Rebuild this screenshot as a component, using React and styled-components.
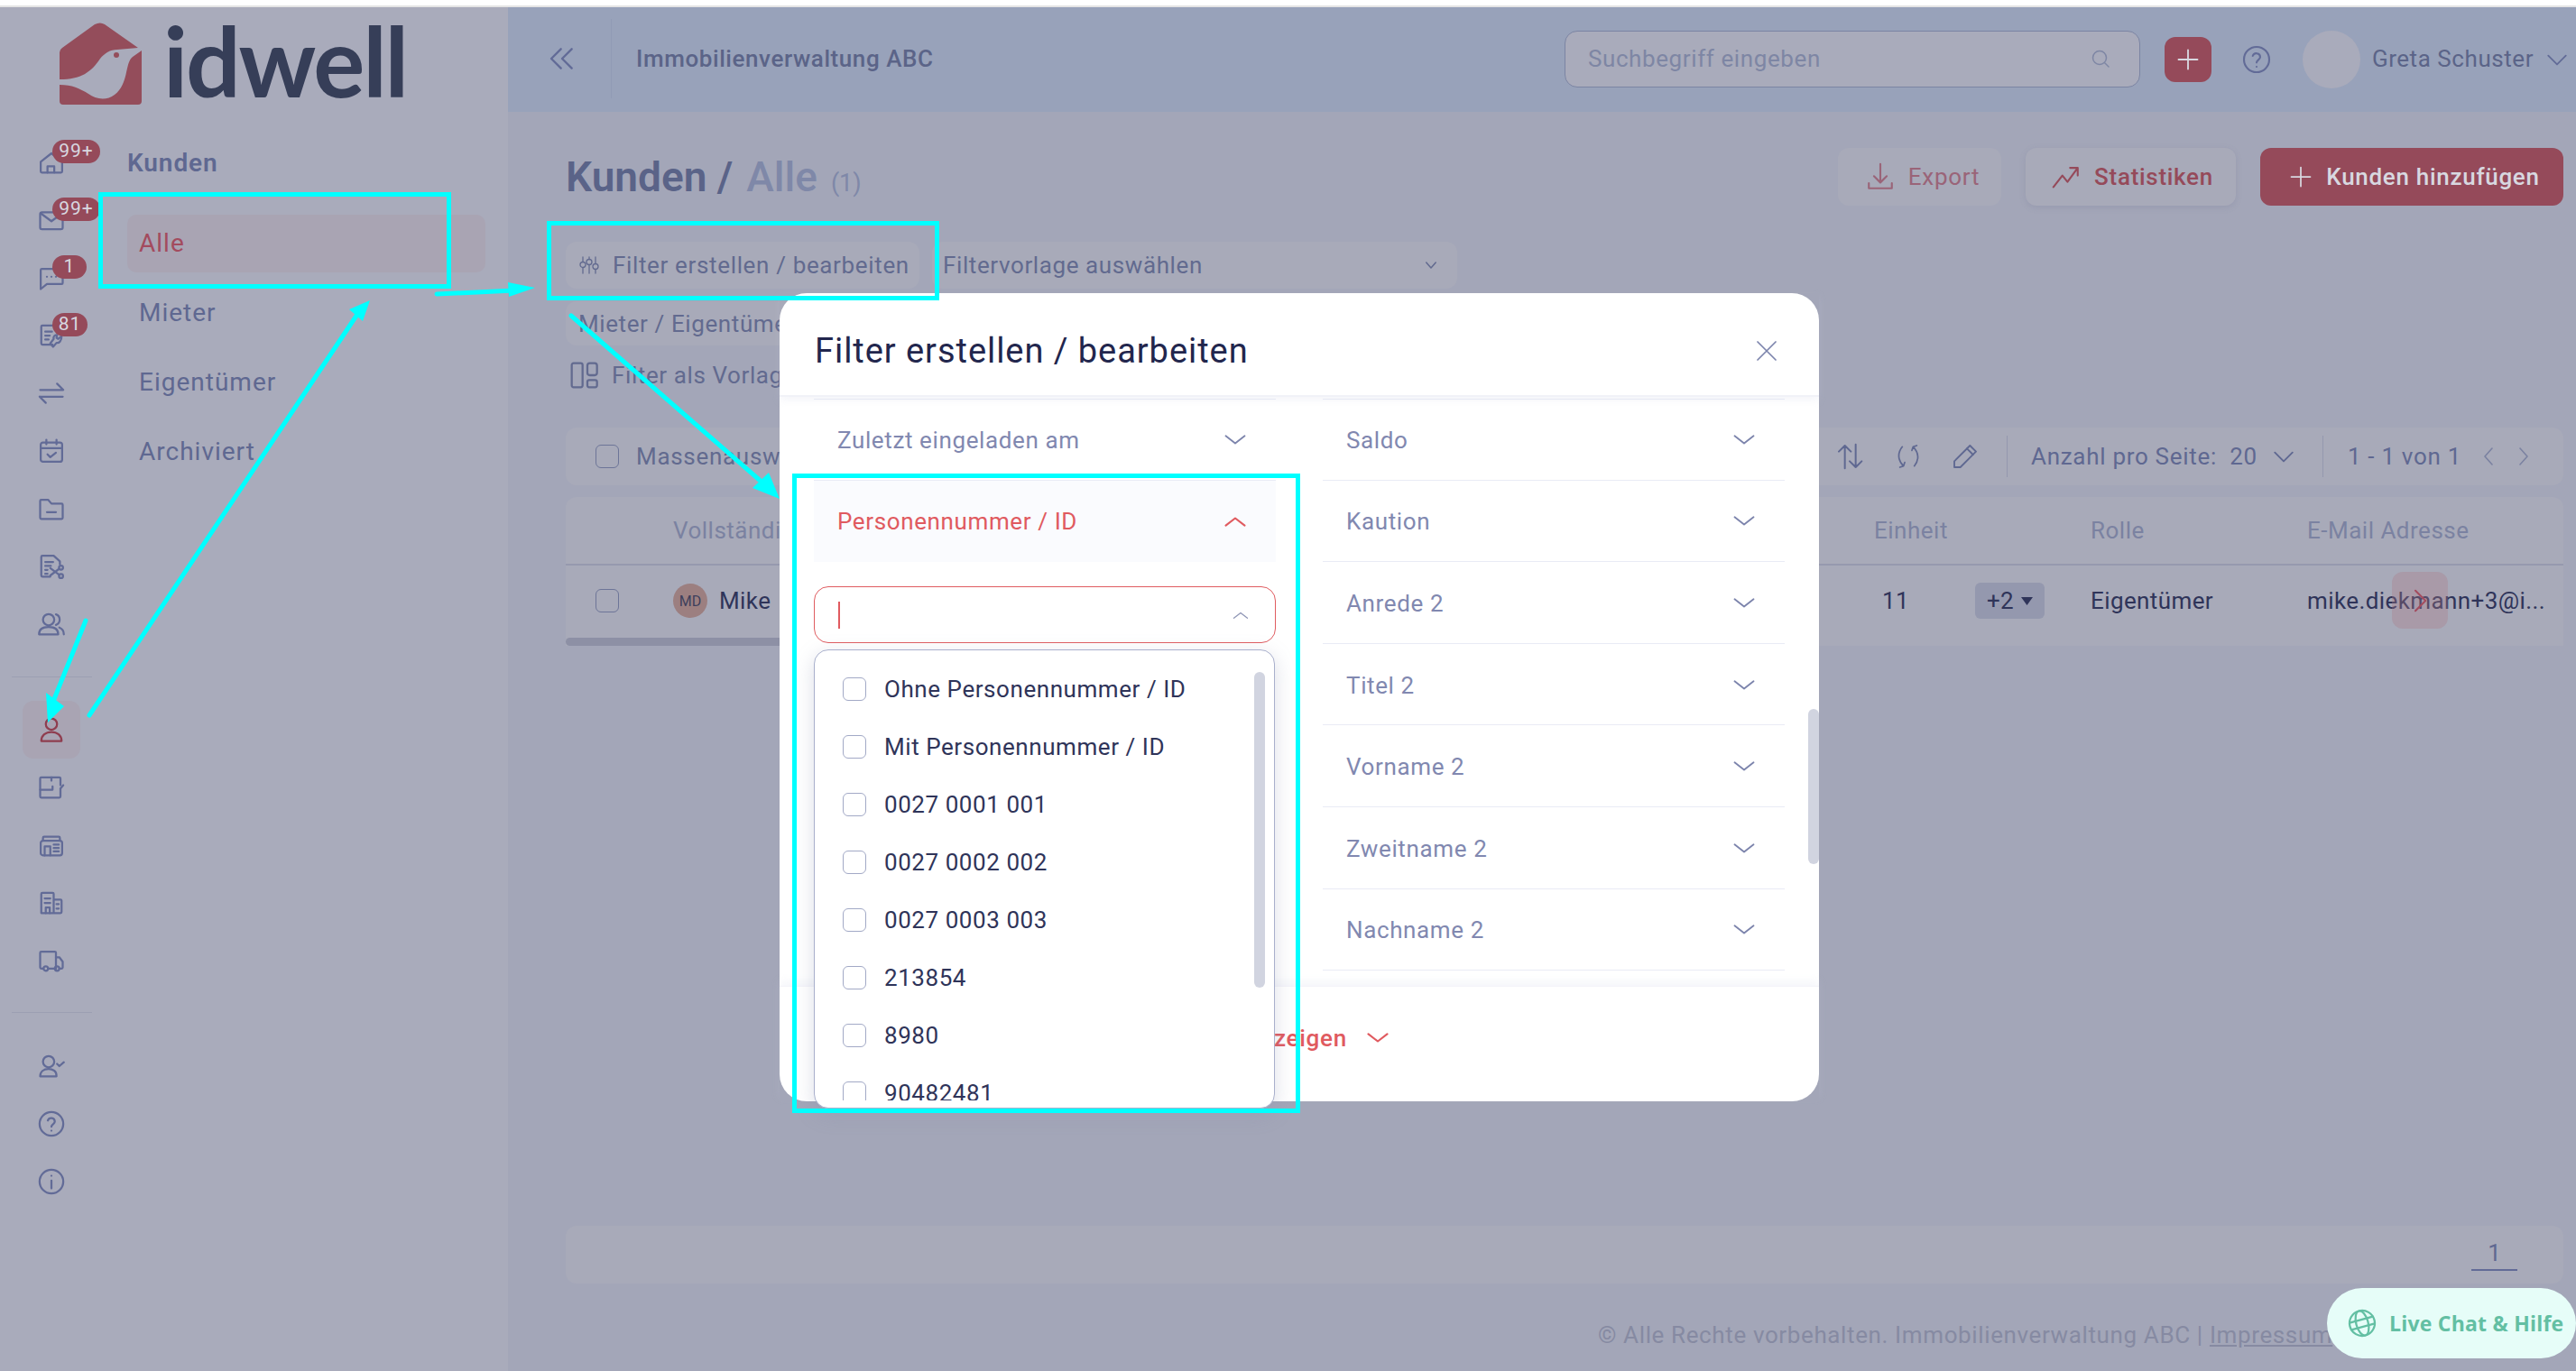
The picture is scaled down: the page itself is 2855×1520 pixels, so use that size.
import React from 'react';
import styled, { createGlobalStyle } from 'styled-components';

const Global = createGlobalStyle`
  html, body { margin: 0; padding: 0; background: #fff; }
  body { font-family: Roboto, "Liberation Sans", sans-serif; overflow: hidden; }
  * { box-sizing: border-box; }
`;

const ink = '#626b97';
const Page = styled.div`position: relative; width: 2855px; height: 1520px; overflow: hidden; background: #fff;`;
const TopEdge = styled.div`height: 8px; background: #fff; border-bottom: 2px solid #e4e4e4;`;
const Shell = styled.div`display: flex; height: 1512px;`;
const Sidebar = styled.aside`width: 563px; flex: none; background: #a9abbb; display: flex; flex-direction: column;`;
const LogoRow = styled.div`height: 140px; flex: none; display: flex; align-items: flex-start; padding: 17px 0 0 66px; gap: 24px;`;
const LogoText = styled.span`font-family: Lato, sans-serif; font-weight: 700; font-size: 107px; line-height: 84px; letter-spacing: -2.2px; color: #363e58;`;
const SideBody = styled.div`display: flex; flex: 1;`;
const Rail = styled.nav`width: 114px; flex: none; display: flex; flex-direction: column; align-items: center;`;
const RailItem = styled.div`
  position: relative; width: 64px; height: 64px; flex: none; display: flex; align-items: center; justify-content: center;
  color: ${p => (p.$active ? '#8f3d4f' : ink)}; background: ${p => (p.$active ? '#a9a4b3' : 'transparent')}; border-radius: 12px;
`;
const Badge = styled.span`
  position: absolute; left: ${p => p.$left}px; top: 7px; height: 26px; width: ${p => p.$w}px; border-radius: 13px;
  background: #954a5a; color: #d8d8e0; font-size: 21px; line-height: 24px; text-align: center; letter-spacing: 1px;
`;
const RailRule = styled.div`width: 89px; height: 1px; background: #9c9fb2; margin: ${p => p.$m};`;
const SubNav = styled.div`flex: 1; padding-left: 27px; padding-right: 25px;`;
const SubHead = styled.div`height: 64px; line-height: 64px; font-weight: 600; font-size: 28px; letter-spacing: .9px; color: #5f6891; margin-top: 1px; margin-bottom: 25px;`;
const SubItem = styled.div`
  height: 64px; line-height: 64px; margin-bottom: 13px; padding-left: 13px; border-radius: 10px; font-size: 28px; letter-spacing: 1px;
  color: ${p => (p.$active ? '#a34b5e' : '#5f6891')}; background: ${p => (p.$active ? '#a9a4b3' : 'transparent')};
`;
const Main = styled.main`flex: 1; background: #a3a6b8; display: flex; flex-direction: column; min-width: 0;`;
const Header = styled.header`height: 116px; flex: none; background: #98a2ba; display: flex; align-items: center; color: ${ink};`;
const Collapse = styled.div`width: 115px; height: 88px; flex: none; display: flex; align-items: center; padding-left: 44px; border-right: 1px solid #919bb5; margin-top: -2px;`;
const Company = styled.div`margin-left: 27px; font-size: 26px; font-weight: 500; letter-spacing: .58px; color: #5b6488; margin-top: -2px;`;
const Search = styled.div`
  margin-left: auto; width: 638px; height: 63px; margin-top: -1px; border: 1.5px solid #7b84a3; border-radius: 14px; background: #a9abbb;
  display: flex; align-items: center; padding: 0 31px 2px 25px; justify-content: space-between; color: #7e86a4; font-size: 26px; letter-spacing: .6px;
`;
const PlusBtn = styled.div`width: 52px; height: 50px; margin-left: 27px; border-radius: 12px; background: #954a5a; color: #d8d8e0; display: flex; align-items: center; justify-content: center;`;
const HelpWrap = styled.div`margin-left: 34px; display: flex; color: ${ink};`;
const Avatar = styled.div`width: 64px; height: 64px; margin-left: 35px; border-radius: 50%; background: #a9abbb;`;
const UserName = styled.div`margin-left: 13px; font-size: 26px; letter-spacing: .55px; color: #5b6488; margin-top: -2px;`;
const UserChevron = styled.div`margin-left: 13px; display: flex; margin-right: 8px;`;
const Content = styled.div`flex: 1; padding: 40px 14px 0 64px; display: flex; flex-direction: column; position: relative;`;
const TitleRow = styled.div`display: flex; align-items: center; height: 64px;`;
const Title = styled.h1`margin: 0; font-size: 46px; font-weight: 600; color: #5a6388; display: flex; align-items: baseline; gap: 15px; white-space: pre;`;
const TitleSoft = styled.span`color: #7f88a8; font-weight: 500;`;
const TitleCount = styled.span`color: #7f88a8; font-size: 27px; font-weight: 400;`;
const Actions = styled.div`margin-left: auto; display: flex; gap: 27px;`;
const ActionBtn = styled.div`
  height: 64px; width: ${p => p.$w}px; padding-left: ${p => p.$pl}px; border-radius: 12px; display: flex; align-items: center; justify-content: center; gap: 14px;
  font-size: 26px; font-weight: ${p => (p.$weight || 500)}; letter-spacing: .7px;
  background: ${p => p.$bg}; color: ${p => p.$fg};
  box-shadow: ${p => p.$shadow || 'none'};
`;
const FilterRow = styled.div`display: flex; gap: 14px; margin-top: 40px; height: 52px;`;
const FilterBtn = styled.div`width: 392px; height: 52px; border-radius: 12px; background: #a8aab9; display: flex; align-items: center; padding-left: 14px; gap: 14px; font-size: 26px; letter-spacing: .65px; color: #626a8f;`;
const TemplateSelect = styled.div`width: 582px; height: 52px; border-radius: 12px; background: #a8aab9; display: flex; align-items: center; justify-content: space-between; padding: 0 20px 0 12px; font-size: 26px; letter-spacing: .6px; color: #626a8f;`;
const Chip = styled.div`margin-top: 14px; height: 49px; width: 400px; border-radius: 12px; background: #a8aab9; padding-left: 14px; display: flex; align-items: center; font-size: 26px; letter-spacing: .6px; color: #626a8f;`;
const SaveRow = styled.div`margin-top: 17px; height: 32px; display: flex; align-items: center; padding-left: 4px; gap: 15px; font-size: 26px; letter-spacing: .6px; color: #626a8f;`;
const Toolbar = styled.div`margin-top: 42px; height: 64px; background: #a8aab9; border-radius: 12px; display: flex; align-items: center; padding: 0 33px 0 33px; font-size: 26px; letter-spacing: .7px; color: #626a8f;`;
const Box = styled.span`width: 26px; height: 26px; flex: none; border: 1.5px solid ${p => p.$c || '#6d7598'}; border-radius: 6px; display: block;`;
const ToolLabel = styled.span`margin-left: 19px;`;
const ToolRight = styled.div`margin-left: auto; display: flex; align-items: center; color: #5f6891;`;
const ToolIcon = styled.span`display: flex; width: 32px; justify-content: center; margin-right: ${p => p.$mr}px;`;
const ToolRule = styled.span`width: 1px; height: 46px; background: #9498ae; margin: 0 ${p => p.$r}px 0 ${p => p.$l}px;`;
const Pager = styled.span`display: flex; margin-left: ${p => p.$ml}px; color: ${p => p.$c || 'inherit'};`;
const Table = styled.div`margin-top: 13px; background: #a8aab9; border-radius: 12px 12px 0 0; position: relative; height: 165px;`;
const Row = styled.div`display: grid; grid-template-columns: 119px 1331px 240px 240px 284px; align-items: center; height: ${p => p.$h}px; border-bottom: ${p => (p.$line ? '2px solid #9699ae' : '0')};`;
const HeadCell = styled.div`font-size: 26px; letter-spacing: .5px; color: #7b82a1;`;
const CheckCell = styled.div`padding-left: 33px;`;
const Cell = styled.div`font-size: 26px; letter-spacing: .4px; word-spacing: 8px; color: #2f3459; display: flex; align-items: center;`;
const UserAvatar = styled.span`width: 38px; height: 38px; border-radius: 50%; background: #9c7f80; color: #3e3f5c; font-size: 16px; display: flex; align-items: center; justify-content: center; margin-right: 13px; letter-spacing: 0;`;
const UnitValue = styled.span`width: 112px; padding-left: 9px;`;
const MoreChip = styled.span`width: 77px; height: 40px; border-radius: 6px; background: #9498ae; display: flex; align-items: center; justify-content: center; gap: 8px;`;
const RowArrow = styled.span`position: absolute; left: 2024px; top: 83px; width: 62px; height: 63px; border-radius: 12px; background: rgba(170,120,135,.32); color: #a34b5e; display: flex; align-items: center; justify-content: center;`;
const TableScroll = styled.div`position: absolute; left: 0; bottom: 0; width: 400px; height: 9px; border-radius: 5px; background: #8d90a5;`;
const Pagination = styled.div`margin-top: 643px; height: 64px; background: #a8aab9; border-radius: 12px; display: flex; justify-content: flex-end; padding: 0 51px 14px 0; align-items: flex-end;`;
const PageNo = styled.div`width: 51px; height: 36px; text-align: center; border-bottom: 2px solid #626b97; font-size: 26px; line-height: 32px; color: #5f6891;`;
const Copyright = styled.div`margin-top: 42px; margin-left: 1144px; white-space: nowrap; font-size: 26px; letter-spacing: .62px; color: #868aa2;`;
const CopyLink = styled.span`text-decoration: underline;`;

const Modal = styled.section`position: absolute; left: 864px; top: 325px; width: 1152px; height: 896px; background: #fff; border-radius: 30px; display: flex; flex-direction: column;`;
const ModalHead = styled.div`height: 115px; flex: none; display: flex; align-items: center; justify-content: space-between; padding: 14px 43px 0 39px; border-bottom: 2px solid #f1f2f8; box-shadow: 0 4px 8px rgba(200,205,225,.18); z-index: 1;`;
const ModalTitle = styled.h2`margin: 0; font-size: 38px; font-weight: 400; letter-spacing: .95px; color: #22264d;`;
const ModalClose = styled.span`color: #7c84ac; display: flex;`;
const ModalBody = styled.div`flex: 1; min-height: 0; padding: 2px 38px 0; display: flex; gap: 52px; overflow: hidden;`;
const Col = styled.div`width: 512px; flex: none;`;
const Acc = styled.div`
  height: 90.6px; display: flex; align-items: center; justify-content: space-between; padding: ${p => (p.$open ? '0' : '2px')} 31px 0 26px;
  border-top: ${p => (p.$top ? '1px solid #e9ebf5' : '0')};
  border-bottom: ${p => (p.$open ? '0' : '1px solid #e9ebf5')};
  background: ${p => (p.$open ? '#fafbfe' : '#fff')};
  color: ${p => (p.$open ? '#e05a5f' : '#8188b0')};
  font-size: 26px; letter-spacing: .62px;
`;
const SelectInput = styled.div`margin-top: 27px; height: 63px; border: 1.5px solid #e05c60; border-radius: 16px; display: flex; align-items: center; justify-content: space-between; padding: 0 28px 0 26px; color: #8f96b5;`;
const Caret = styled.span`width: 2px; height: 30px; background: #e05a5f;`;
const ModalFoot = styled.div`height: 128px; flex: none; border-top: 1px solid #f4f4f9; box-shadow: 0 -5px 9px rgba(200,205,225,.18); display: flex; justify-content: flex-end; align-items: center; gap: 20px; padding: 0 475px 14px 0; color: #e05a5f; font-size: 26px; font-weight: 500; letter-spacing: .75px; z-index: 1;`;
const ModalThumb = styled.div`position: absolute; right: 0; top: 461px; width: 12px; height: 172px; border-radius: 6px; background: #d1d4e0;`;
const Dropdown = styled.div`position: absolute; z-index: 2; left: 38px; top: 395px; width: 511px; height: 509px; background: #fff; border: 1.5px solid #a9b0cc; border-radius: 16px; padding-top: 11px; box-shadow: 0 6px 22px rgba(130,135,170,.28);`;
const List = styled.div`height: 488px; overflow: hidden;`;
const Option = styled.div`height: 64px; display: flex; align-items: center; padding-left: 31px; gap: 20px; font-size: 26px; letter-spacing: .56px; color: #2f3459;`;
const DropThumb = styled.div`position: absolute; right: 10px; top: 24px; width: 12px; height: 350px; border-radius: 6px; background: #d1d4e0;`;
const LiveChat = styled.div`position: absolute; right: 0; bottom: 14px; width: 276px; height: 78px; border-radius: 39px; background: #e6fdf8; color: #63bfa3; display: flex; align-items: center; padding-left: 23px; gap: 14px; font-size: 23px; font-weight: 700; letter-spacing: .22px; font-family: "Open Sans", sans-serif; z-index: 3;`;
const Notes = styled.svg`position: absolute; left: 0; top: 0; z-index: 5; pointer-events: none;`;
const ChevronTint = styled.span`color: ${p => p.$c}; display: flex;`;

const Svg = ({ s = 32, w = 2, children, style }) => (
  <svg width={s} height={s} viewBox="0 0 24 24" fill="none" stroke="currentColor" strokeWidth={w} strokeLinecap="round" strokeLinejoin="round" style={style}>{children}</svg>
);
const Down = ({ s = 28, c = '#7c84ac', w = 1.6 }) => <ChevronTint $c={c}><Svg s={s} w={w}><path d="M3 8l9 7 9-7" /></Svg></ChevronTint>;
const Up = ({ s = 28, c = '#e05a5f', w = 1.8 }) => <ChevronTint $c={c}><Svg s={s} w={w}><path d="M3 16l9-7 9 7" /></Svg></ChevronTint>;

const icons = {
  home: <><path d="M2.500 11.500 12 4l9.500 7.500V20a1 1 0 0 1-1 1h-17a1 1 0 0 1-1-1z" /><path d="M8.500 21v-5.500h6V21" /></>,
  mail: <><rect x="2" y="5" width="20" height="15" rx="1.500" /><path d="M2.500 6 12 13l9.500-7" /></>,
  chat: <><path d="M3.500 4H21a1 1 0 0 1 1 1v11.500a1 1 0 0 1-1 1H8L2.500 22V5a1 1 0 0 1 1-1z" /><path d="M8 11h.01M12 11h.01M16 11h.01" /></>,
  service: <><path d="M13 20H4a1 1 0 0 1-1-1V4a1 1 0 0 1 1-1h11l5 5v3" /><path d="M6.500 8.500h6M6.500 12h4M6.500 15.500h3" /><path d="M21 12.500l-3 2.500-1.500-1 .5-2.500c-2-.5-3.500 1.500-3 3.500L11 19l2.500 3 3-3.500c2.500.5 4.500-2 4.500-6z" /></>,
  swap: <><path d="M2 9h20M17 3.500 22.500 9" /><path d="M22 15H2M7 20.500 1.500 15" /></>,
  cal: <><rect x="2.500" y="4.500" width="19" height="17" rx="2" /><path d="M2.500 9.500h19M7.500 2v4M16.500 2v4M8.500 15l2.500 2.500 5-4" /></>,
  folder: <><path d="M2 5a1 1 0 0 1 1-1h6l3 3.500h9a1 1 0 0 1 1 1V20a1 1 0 0 1-1 1H3a1 1 0 0 1-1-1z" /><path d="M8 15h8" /></>,
  doccut: <><path d="M11 21H4a1 1 0 0 1-1-1V3.500a1 1 0 0 1 1-1h10l5.500 5V10" /><path d="M6.500 8h7M6.500 11.500h5M6.500 15h2M6.500 18.500h2" /><circle cx="20.500" cy="13" r="1.800" /><circle cx="20.500" cy="20.500" r="1.800" /><path d="M11 13.500l8 6M11 20l8-6" /></>,
  users: <><circle cx="9.500" cy="8" r="5" /><path d="M1 21c0-4.500 3.500-6.500 8.500-6.500s8.500 2 8.500 6.500z" /><path d="M16 3.300a5 5 0 0 1 0 9.400M19 15c2.500 1 4 3 4 6" /></>,
  user: <><circle cx="12" cy="7" r="5" /><path d="M3 22c0-5 4-8 9-8s9 3 9 8z" /></>,
  plan: <><path d="M20 13v7a1 1 0 0 1-1 1H3a1 1 0 0 1-1-1V4a1 1 0 0 1 1-1h16a1 1 0 0 1 1 1v6" /><path d="M2 14h11v-3M12 3v3" /><path d="M20 13l2.500-3" /></>,
  shop: <><rect x="2.500" y="8" width="19" height="13" rx="2" /><path d="M4.500 8V5.500a1 1 0 0 1 1-1h13a1 1 0 0 1 1 1V8" /><path d="M6 21v-8h5v8M14 11.500h4.500M14 14.500h4.500M14 17.500h4.500" /></>,
  building: <><path d="M3 21V4a1 1 0 0 1 1-1h9a1 1 0 0 1 1 1v17zM14 9h6a1 1 0 0 1 1 1v10a1 1 0 0 1-1 1h-6" /><path d="M6 8h5M6 12h5M7 21v-5h3.500v5M16.500 13h2M16.500 17h2" /></>,
  truck: <><path d="M5 19H3a1 1 0 0 1-1-1V5a1 1 0 0 1 1-1h12a1 1 0 0 1 1 1v14H9" /><path d="M16 9h3l3 4v5a1 1 0 0 1-1 1h-2M16 19h-1" /><circle cx="7" cy="19" r="2" /><circle cx="17" cy="19" r="2" /></>,
  usercheck: <><circle cx="9.500" cy="8" r="5" /><path d="M2 21c0-4 3-6.500 7.500-6.500 2 0 3.500.5 5 1.500 1.500 1 2 3 2 5z" /><path d="M17 10l2 2 4-3.500" /></>,
  help: <><circle cx="12" cy="12" r="10.500" /><path d="M8.800 9a3.200 3.200 0 0 1 6.200 1c0 2-3 2.500-3 4.500M12 18h.01" /></>,
  info: <><circle cx="12" cy="12" r="10.500" /><path d="M12 11v7M12 6.800h.01" /></>,
};

const railTop = [['home', '99+', 53], ['mail', '99+', 53], ['chat', '1', 38], ['service', '81', 39], ['swap'], ['cal'], ['folder'], ['doccut'], ['users']];
const railMid = ['user', 'plan', 'shop', 'building', 'truck'];
const railBot = ['usercheck', 'help', 'info'];
const leftFilters = ['Saldo', 'Kaution', 'Anrede 2', 'Titel 2', 'Vorname 2', 'Zweitname 2', 'Nachname 2'];
const options = ['Ohne Personennummer / ID', 'Mit Personennummer / ID', '0027 0001 001', '0027 0002 002', '0027 0003 003', '213854', '8980', '90482481'];

const Logo = () => (
  <svg width="91" height="91" viewBox="66 25 91 91" style={{ flex: 'none' }}>
    <path fill="#944d5b" d="M66 88V58q0-3 3-5l36-26q6-3 11 0l37 26-23 2c-8 0-14 4-19 10-10 15-21 23-45 23z" />
    <path fill="#944d5b" d="M66 94c14 0 22 4 32 10 8 6 20 8 29 1 16-12 11-35 20-42l10-7v56q0 4-4 4H70q-4 0-4-4z" />
    <circle fill="#944d5b" cx="129" cy="61" r="3" />
  </svg>
);

const Arrow = ({ d, head }) => (
  <g>
    <path d={d} stroke="#00ffff" strokeWidth="5" strokeLinecap="round" fill="none" />
    <polygon points={head} fill="#00ffff" />
  </g>
);

export default function App() {
  return (
    <Page>
      <Global />
      <TopEdge />
      <Shell>
        <Sidebar>
          <LogoRow><Logo /><LogoText>idwell</LogoText></LogoRow>
          <SideBody>
            <Rail>
              {railTop.map(([k, b, w]) => (
                <RailItem key={k}>
                  <Svg s={30} w={1.8}>{icons[k]}</Svg>
                  {b && <Badge $left={33} $w={w}>{b}</Badge>}
                </RailItem>
              ))}
              <RailRule $m="26px 0 26px" />
              {railMid.map((k, i) => <RailItem key={k} $active={i === 0}><Svg s={30} w={1.8}>{icons[k]}</Svg></RailItem>)}
              <RailRule $m="25px 0 27px" />
              {railBot.map(k => <RailItem key={k}><Svg s={30} w={1.8}>{icons[k]}</Svg></RailItem>)}
            </Rail>
            <SubNav>
              <SubHead>Kunden</SubHead>
              <SubItem $active>Alle</SubItem>
              <SubItem>Mieter</SubItem>
              <SubItem>Eigentümer</SubItem>
              <SubItem>Archiviert</SubItem>
            </SubNav>
          </SideBody>
        </Sidebar>
        <Main>
          <Header>
            <Collapse><Svg s={32} w={1.8}><path d="M11 4 3 12l8 8M20 4l-8 8 8 8" /></Svg></Collapse>
            <Company>Immobilienverwaltung ABC</Company>
            <Search>
              <span>Suchbegriff eingeben</span>
              <Svg s={24} w={1.5}><circle cx="11" cy="11" r="7.500" /><path d="m17 17 4 4" /></Svg>
            </Search>
            <PlusBtn><Svg s={28} w={1.6}><path d="M12 3v18M3 12h18" /></Svg></PlusBtn>
            <HelpWrap><Svg s={32} w={1.6}>{icons.help}</Svg></HelpWrap>
            <Avatar />
            <UserName>Greta Schuster</UserName>
            <UserChevron><Svg s={26} w={1.7}><path d="M3 8l9 9 9-9" /></Svg></UserChevron>
          </Header>
          <Content>
            <TitleRow>
              <Title>Kunden /<TitleSoft>Alle</TitleSoft><TitleCount>(1)</TitleCount></Title>
              <Actions>
                <ActionBtn $w={181} $pl={6} $bg="#a8aab9" $fg="#9a6478" $weight={400}><Svg s={34} w={1.5}><path d="M12 2v14M7 11.500l5 5 5-5M3 17v4h18v-4" /></Svg>Export</ActionBtn>
                <ActionBtn $w={233} $pl={3} $bg="#a8aab9" $fg="#954a5a" $shadow="0 2px 6px rgba(120,124,150,.25)"><Svg s={34} w={1.5}><path d="M2 20 9 11l4 5 8-11M15 5h6v6" /></Svg>Statistiken</ActionBtn>
                <ActionBtn $w={336} $pl={5} $bg="#954a5a" $fg="#d8d8e0"><Svg s={28} w={1.5}><path d="M12 3v18M3 12h18" /></Svg>Kunden hinzufügen</ActionBtn>
              </Actions>
            </TitleRow>
            <FilterRow>
              <FilterBtn>
                <Svg s={24} w={1.3}><path d="M5 3v5M5 15v6M12 3v2M12 12v9M19 3v7M19 17v4" /><circle cx="5" cy="11.500" r="3" /><circle cx="12" cy="8.500" r="3" /><circle cx="19" cy="13.500" r="3" /></Svg>
                Filter erstellen / bearbeiten
              </FilterBtn>
              <TemplateSelect>Filtervorlage auswählen<Svg s={18} w={2}><path d="M5 8l7 8 7-8" /></Svg></TemplateSelect>
            </FilterRow>
            <Chip>Mieter / Eigentümer</Chip>
            <SaveRow>
              <Svg s={32} w={1.7}><rect x="2" y="2" width="9" height="20" rx="1.500" /><rect x="15" y="2" width="8" height="10" rx="2" /><rect x="15" y="16" width="8" height="6" rx="1.500" /></Svg>
              Filter als Vorlage speichern
            </SaveRow>
            <Toolbar>
              <Box />
              <ToolLabel>Massenauswahl</ToolLabel>
              <ToolRight>
                <ToolIcon $mr={33}><Svg s={38} w={1.5}><path d="M8 22V3M3 8l5-5 5 5M17 2v19M12 16l5 5 5-5" /></Svg></ToolIcon>
                <ToolIcon $mr={31}><Svg s={40} w={1.3}><path d="M7 4c-4 5-4 11 1 16M5 21l3-1 1-3M17 20c4-5 4-11-1-16M19 3l-3 1-1 3" /></Svg></ToolIcon>
                <ToolIcon $mr={0}><Svg s={34} w={1.4}><path d="M16 3l5 5L8 21H3v-5z" /><path d="M13.500 5.500l5 5" /></Svg></ToolIcon>
                <ToolRule $l={30} $r={26} />
                <span>Anzahl pro Seite:&nbsp;&nbsp;20</span>
                <Pager $ml={16}><Svg s={26} w={1.7}><path d="M3 8l9 9 9-9" /></Svg></Pager>
                <ToolRule $l={30} $r={27} />
                <span>1 - 1 von 1</span>
                <Pager $ml={19} $c="#7b82a1"><Svg s={24} w={1.6}><path d="M15 3l-8 9 8 9" /></Svg></Pager>
                <Pager $ml={13} $c="#7b82a1"><Svg s={24} w={1.6}><path d="M9 3l8 9-8 9" /></Svg></Pager>
              </ToolRight>
            </Toolbar>
            <Table>
              <Row $h={76} $line>
                <div />
                <HeadCell>Vollständiger Name</HeadCell>
                <HeadCell>Einheit</HeadCell>
                <HeadCell>Rolle</HeadCell>
                <HeadCell>E-Mail Adresse</HeadCell>
              </Row>
              <Row $h={78}>
                <CheckCell><Box /></CheckCell>
                <Cell><UserAvatar>MD</UserAvatar>Mike Diekmann</Cell>
                <Cell><UnitValue>11</UnitValue><MoreChip>+2<svg width="13" height="9" viewBox="0 0 13 9"><path d="M0 0h13L6.500 9z" fill="#2f3459" /></svg></MoreChip></Cell>
                <Cell>Eigentümer</Cell>
                <Cell>mike.diekmann+3@i...</Cell>
              </Row>
              <RowArrow><Svg s={30} w={1.6}><path d="M8 3l9 9-9 9" /></Svg></RowArrow>
              <TableScroll />
            </Table>
            <Pagination><PageNo>1</PageNo></Pagination>
            <Copyright>© Alle Rechte vorbehalten. Immobilienverwaltung ABC | <CopyLink>Impressum</CopyLink></Copyright>
          </Content>
        </Main>
      </Shell>

      <Modal>
        <ModalHead>
          <ModalTitle>Filter erstellen / bearbeiten</ModalTitle>
          <ModalClose><Svg s={30} w={1.4}><path d="M4 4l16 16M20 4 4 20" /></Svg></ModalClose>
        </ModalHead>
        <ModalBody>
          <Col>
            <Acc $top>Zuletzt eingeladen am<Down /></Acc>
            <Acc $open>Personennummer / ID<Up /></Acc>
            <SelectInput><Caret /><Svg s={20} w={1.5}><path d="M3 16l9-7 9 7" /></Svg></SelectInput>
          </Col>
          <Col>
            {leftFilters.map((f, i) => <Acc key={f} $top={i === 0}>{f}<Down /></Acc>)}
          </Col>
        </ModalBody>
        <ModalFoot>Mehr anzeigen<Down c="#e05a5f" w={1.8} /></ModalFoot>
        <ModalThumb />
        <Dropdown>
          <List>
            {options.map(o => <Option key={o}><Box $c="#a2a9c6" />{o}</Option>)}
          </List>
          <DropThumb />
        </Dropdown>
      </Modal>

      <LiveChat>
        <Svg s={32} w={1.7} style={{ transform: 'rotate(-15deg)' }}><circle cx="12" cy="12" r="10.500" /><ellipse cx="12" cy="12" rx="5" ry="10.500" /><path d="M2 9h20M2 15h20" /></Svg>
        Live Chat & Hilfe
      </LiveChat>

      <Notes width="2855" height="1520" viewBox="0 0 2855 1520">
        <g fill="none" stroke="#00ffff" strokeWidth="5">
          <rect x="111.500" y="215.500" width="386" height="102" />
          <rect x="608.500" y="247.500" width="430" height="83" />
          <rect x="880.500" y="527.500" width="558" height="704" />
        </g>
        <Arrow d="M484 326 L570 322" head="563,313 593,319 564,329" />
        <Arrow d="M99 793 L395 350" head="387,343 410,333 402,356" />
        <Arrow d="M95 688 L60 775" head="51,768 71,783 53,801" />
        <Arrow d="M633 350 L845 535" head="852,524 864,553 834,541" />
      </Notes>
    </Page>
  );
}
